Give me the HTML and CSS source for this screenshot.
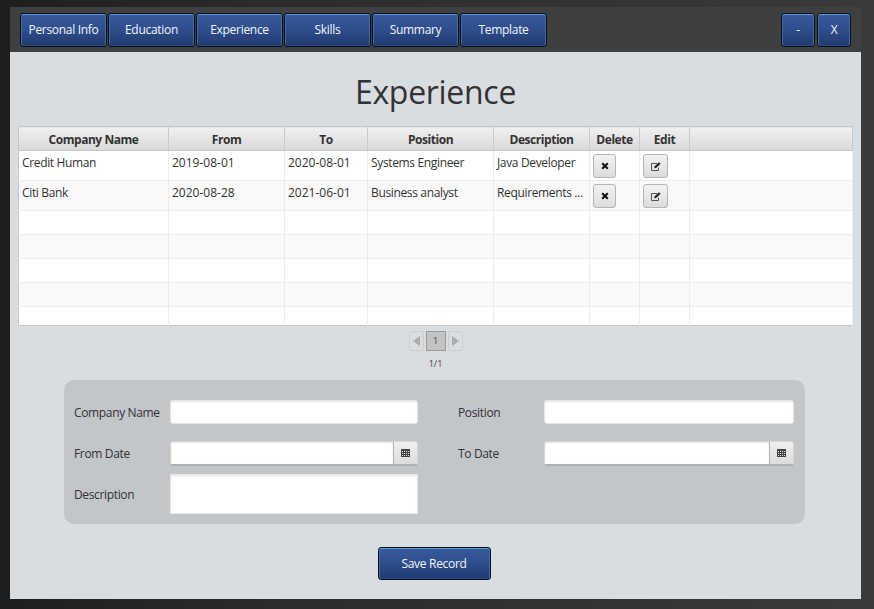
FILE: index.html
```html
<html>

<head>
    <title>Experience</title>
    <link rel="stylesheet" href="styles.css">
</head>

<body>
    <div class="window">
        <div class="toolbar">
            <div class="nav">
                <button class="btn nav-btn">Personal Info</button>
                <button class="btn nav-btn">Education</button>
                <button class="btn nav-btn">Experience</button>
                <button class="btn nav-btn">Skills</button>
                <button class="btn nav-btn">Summary</button>
                <button class="btn nav-btn">Template</button>
            </div>
            <div class="win-btns">
                <button class="btn win-btn">-</button>
                <button class="btn win-btn">X</button>
            </div>
        </div>

        <div class="content">
            <h1 class="title">Experience</h1>

            <table class="records">
                <colgroup>
                    <col class="c1"><col class="c2"><col class="c3"><col class="c4"><col class="c5"><col class="c6"><col class="c7"><col>
                </colgroup>
                <thead>
                    <tr>
                        <th>Company Name</th>
                        <th>From</th>
                        <th>To</th>
                        <th>Position</th>
                        <th>Description</th>
                        <th>Delete</th>
                        <th>Edit</th>
                        <th></th>
                    </tr>
                </thead>
                <tbody>
                    <tr class="tall">
                        <td>Credit Human</td>
                        <td class="day">2019-08-01</td>
                        <td class="day">2020-08-01</td>
                        <td>Systems Engineer</td>
                        <td>Java Developer</td>
                        <td>
                            <button class="icon-btn">
                                <svg width="8" height="8" viewBox="0 0 8 8"><path d="M1.2 1.2 L6.8 6.8 M6.8 1.2 L1.2 6.8" stroke="#111" stroke-width="2"/></svg>
                            </button>
                        </td>
                        <td>
                            <button class="icon-btn">
                                <svg width="10" height="9" viewBox="0 0 10 9"><path d="M6 1.5 H.5 V8.5 H7.5 V5.5" fill="none" stroke="#555" stroke-width="1"/><path d="M3.5 4.5 L8 .3 L9.6 1.8 L5 6 L3.2 6.3 Z" fill="#222"/></svg>
                            </button>
                        </td>
                        <td></td>
                    </tr>
                    <tr class="tall odd">
                        <td>Citi Bank</td>
                        <td class="day">2020-08-28</td>
                        <td class="day">2021-06-01</td>
                        <td>Business analyst</td>
                        <td>Requirements ...</td>
                        <td>
                            <button class="icon-btn">
                                <svg width="8" height="8" viewBox="0 0 8 8"><path d="M1.2 1.2 L6.8 6.8 M6.8 1.2 L1.2 6.8" stroke="#111" stroke-width="2"/></svg>
                            </button>
                        </td>
                        <td>
                            <button class="icon-btn">
                                <svg width="10" height="9" viewBox="0 0 10 9"><path d="M6 1.5 H.5 V8.5 H7.5 V5.5" fill="none" stroke="#555" stroke-width="1"/><path d="M3.5 4.5 L8 .3 L9.6 1.8 L5 6 L3.2 6.3 Z" fill="#222"/></svg>
                            </button>
                        </td>
                        <td></td>
                    </tr>
                    <tr class="empty"><td></td><td></td><td></td><td></td><td></td><td></td><td></td><td></td></tr>
                    <tr class="empty odd"><td></td><td></td><td></td><td></td><td></td><td></td><td></td><td></td></tr>
                    <tr class="empty"><td></td><td></td><td></td><td></td><td></td><td></td><td></td><td></td></tr>
                    <tr class="empty odd"><td></td><td></td><td></td><td></td><td></td><td></td><td></td><td></td></tr>
                    <tr class="last"><td></td><td></td><td></td><td></td><td></td><td></td><td></td><td></td></tr>
                </tbody>
            </table>

            <div class="pager">
                <div class="pages">
                    <span class="page-arrow"><i class="tri-left"></i></span>
                    <span class="page-num">1</span>
                    <span class="page-arrow"><i class="tri-right"></i></span>
                </div>
                <div class="page-count">1/1</div>
            </div>

            <form class="panel" autocomplete="off">
                <label class="lbl">Company Name</label>
                <input type="text" class="field">
                <label class="lbl lbl-right">Position</label>
                <input type="text" class="field">

                <label class="lbl row2">From Date</label>
                <div class="date row2">
                    <input type="text" class="date-input">
                    <span class="date-btn">
                        <svg width="9" height="8" viewBox="0 0 9 8"><path d="M0 0H9V8H0Z" fill="#444"/><path d="M1 2H2V3H1ZM3 2H4V3H3ZM5 2H6V3H5ZM7 2H8V3H7ZM1 4H2V5H1ZM3 4H4V5H3ZM5 4H6V5H5ZM7 4H8V5H7ZM1 6H2V7H1ZM3 6H4V7H3ZM5 6H6V7H5ZM7 6H8V7H7Z" fill="#ddd"/></svg>
                    </span>
                </div>
                <label class="lbl lbl-right row2">To Date</label>
                <div class="date row2">
                    <input type="text" class="date-input">
                    <span class="date-btn">
                        <svg width="9" height="8" viewBox="0 0 9 8"><path d="M0 0H9V8H0Z" fill="#444"/><path d="M1 2H2V3H1ZM3 2H4V3H3ZM5 2H6V3H5ZM7 2H8V3H7ZM1 4H2V5H1ZM3 4H4V5H3ZM5 4H6V5H5ZM7 4H8V5H7ZM1 6H2V7H1ZM3 6H4V7H3ZM5 6H6V7H5ZM7 6H8V7H7Z" fill="#ddd"/></svg>
                    </span>
                </div>

                <label class="lbl">Description</label>
                <textarea class="field desc"></textarea>
            </form>

            <div class="save-row">
                <button class="btn save-btn">Save Record</button>
            </div>
        </div>
    </div>
</body>

</html>
```

FILE: styles.css
```css
body {
    margin: 0;
    height: 609px;
    overflow: hidden;
    padding: 7px 13px 10px 10px;
    box-sizing: border-box;
    background: linear-gradient(to right, #1e1e1e 0, #2b2b2b 30%, #3a3a3a 100%);
    font-family: "Open Sans", "Noto Sans", sans-serif;
    font-size: 12px;
    color: #333;
}

.window {
    height: 592px;
    display: flex;
    flex-direction: column;
}

.toolbar {
    height: 45px;
    box-sizing: border-box;
    padding: 6px 10px 0 10px;
    background-color: #3e3f40;
    display: flex;
    justify-content: space-between;
}

.nav,
.win-btns {
    display: flex;
    gap: 1px;
    height: 34px;
}

.win-btns {
    gap: 2px;
}

.btn {
    padding: 0;
    border: 1px solid #0b0f1a;
    border-radius: 3px;
    background: linear-gradient(to bottom, #37599f 0, #2f4f8e 45%, #223a70 100%);
    box-shadow: inset 0 1px 0 #5b9ad6, inset 1px 0 0 #3f6aa8, inset -1px 0 0 #3f6aa8, inset 0 -1px 0 #2a4a85;
    color: #f2f5fa;
    font-family: "Open Sans", "Noto Sans", sans-serif;
    font-size: 12px;
    letter-spacing: -0.3px;
}

.nav-btn {
    width: 87px;
    padding-bottom: 2px;
}

.win-btn {
    width: 34px;
    padding-bottom: 2px;
}

.content {
    flex: 1;
    background-color: #d8dde1;
    padding: 0 8px;
    display: flex;
    flex-direction: column;
}

.title {
    margin: 17px 0 0 0;
    height: 57px;
    line-height: 45px;
    text-align: center;
    font-weight: normal;
    font-size: 32px;
    letter-spacing: -0.3px;
    color: #333;
}

.records {
    width: 835px;
    height: 200px;
    table-layout: fixed;
    border-collapse: collapse;
    border: 1px solid #c4c6c8;
    background-color: #fff;
}

.c1 { width: 150px; }
.c2 { width: 116px; }
.c3 { width: 83px; }
.c4 { width: 126px; }
.c5 { width: 96px; }
.c6 { width: 50px; }
.c7 { width: 50px; }

.records th {
    height: 24px;
    padding: 1px 0 0 0;
    box-sizing: border-box;
    background: linear-gradient(to bottom, #f0f0f0, #d9d9d9);
    border-right: 1px solid #c9c9c9;
    border-bottom: 1px solid #c4c6c8;
    font-size: 12px;
    font-weight: bold;
    letter-spacing: -0.45px;
    color: #333;
}

.records td {
    padding: 0 3px;
    border-right: 1px solid #ececec;
    border-bottom: 1px solid #ececec;
    vertical-align: top;
    font-size: 12px;
    letter-spacing: -0.35px;
    white-space: nowrap;
    overflow: hidden;
    box-sizing: border-box;
}

.records td.day {
    letter-spacing: 0;
}

.records tr.odd td {
    background-color: #f9f9f9;
}

.tall td {
    height: 30px;
    line-height: 24px;
}

.empty td {
    height: 24px;
}

.last td {
    height: 19px;
    border-bottom: none;
}

.icon-btn {
    width: 23px;
    height: 24px;
    margin: 3px 0 0 0;
    padding: 0;
    display: flex;
    align-items: center;
    justify-content: center;
    border: 1px solid #b5b5b5;
    border-radius: 3px;
    background: linear-gradient(to bottom, #f2f2f2, #dcdcdc);
}

.records td:nth-child(7) .icon-btn {
    width: 25px;
}

.pager {
    display: flex;
    flex-direction: column;
    align-items: center;
    margin-top: 5px;
    height: 49px;
}

.pages {
    display: flex;
    gap: 2px;
    height: 20px;
}

.page-arrow {
    width: 13px;
    height: 18px;
    border: 1px solid #c9cdd1;
    border-radius: 3px;
    display: flex;
    align-items: center;
    justify-content: center;
}

.tri-left,
.tri-right {
    width: 0;
    height: 0;
    border-top: 5px solid transparent;
    border-bottom: 5px solid transparent;
}

.tri-left {
    border-right: 7px solid #a9adb1;
}

.tri-right {
    border-left: 7px solid #a9adb1;
}

.page-num {
    width: 18px;
    height: 18px;
    border: 1px solid #9c9c9c;
    background-color: #c3c3c3;
    text-align: center;
    font-size: 9px;
    line-height: 18px;
    color: #444;
}

.page-count {
    margin-top: 3px;
    font-size: 9px;
    line-height: 20px;
    color: #444;
}

.panel {
    margin: 0 48px 0 46px;
    height: 144px;
    box-sizing: border-box;
    padding: 20px 11px 10px 10px;
    border-radius: 10px;
    background-color: #c2c5c9;
    display: grid;
    grid-template-columns: 96px 248px 126px 250px;
    grid-template-rows: auto auto auto;
    align-content: start;
    row-gap: 8px;
    align-items: center;
}

.lbl {
    font-size: 12px;
    letter-spacing: -0.35px;
    color: #333;
}

.lbl-right {
    padding-left: 40px;
}

.row2 {
    margin-top: 9px;
}

.field {
    box-sizing: border-box;
    width: 100%;
    height: 24px;
    margin: 0;
    border: 1px solid #e6e8ea;
    border-radius: 3px;
    background-color: #fff;
    box-shadow: inset 0 1px 2px #e4e4e4;
    outline: none;
}

.desc {
    height: 40px;
    border-radius: 0;
    resize: none;
    display: block;
}

.date {
    display: flex;
    height: 25px;
    box-sizing: border-box;
    border: 1px solid #d3d5d8;
    border-bottom: 2px solid #aeb0b3;
    border-radius: 3px;
    overflow: hidden;
}

.date-input {
    flex: 1;
    min-width: 0;
    border: none;
    padding: 0;
    background-color: #fff;
    box-shadow: inset 0 1px 2px #e4e4e4;
    outline: none;
}

.date-btn {
    width: 23px;
    border-left: 1px solid #b5b5b5;
    background: linear-gradient(to bottom, #f0f0f0, #dcdcdc);
    display: flex;
    align-items: center;
    justify-content: center;
}

.save-row {
    display: flex;
    justify-content: center;
    margin-top: 23px;
    padding-right: 3px;
}

.save-btn {
    width: 113px;
    height: 33px;
}
```
